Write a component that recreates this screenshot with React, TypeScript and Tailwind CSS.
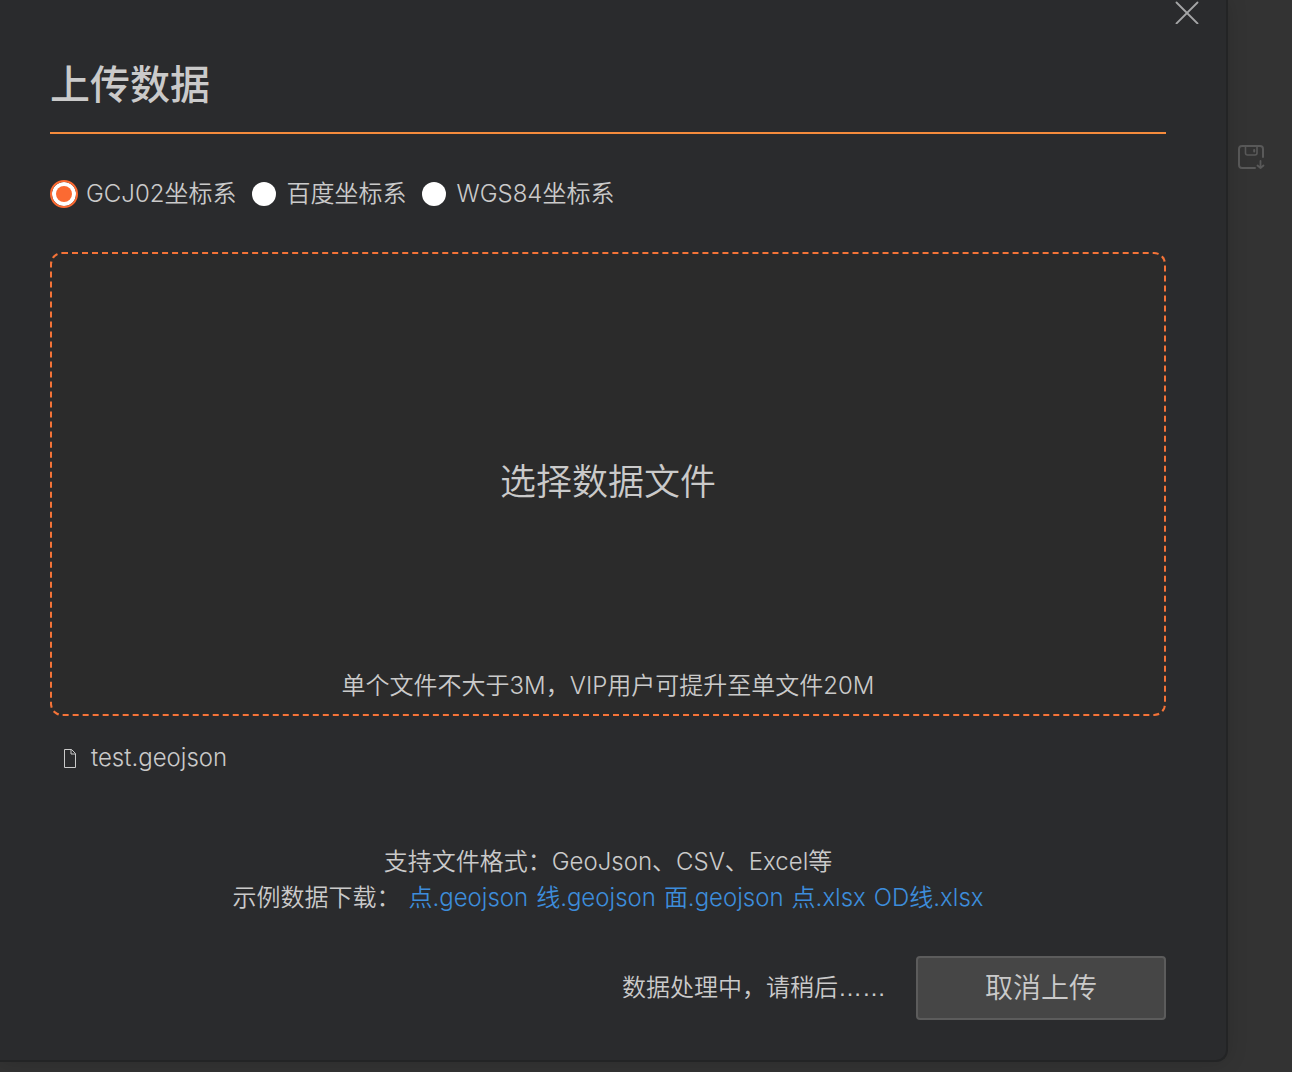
import { useState } from "react";

const systems = [
  { value: "gcj02", label: "GCJ02坐标系" },
  { value: "baidu", label: "百度坐标系" },
  { value: "wgs84", label: "WGS84坐标系" },
];

const samples = [
  "点.geojson",
  "线.geojson",
  "面.geojson",
  "点.xlsx",
  "OD线.xlsx",
];

function CloseIcon() {
  return (
    <svg
      viewBox="0 0 24 24"
      className="size-6"
      fill="none"
      stroke="currentColor"
      strokeWidth="1.8"
      strokeLinecap="round"
    >
      <path d="M1.5 2.5 22.5 23.5M22.5 2.5 1.5 23.5" />
    </svg>
  );
}

function FileIcon() {
  return (
    <svg
      viewBox="0 0 14 20"
      className="h-5 w-[14px]"
      fill="none"
      stroke="currentColor"
      strokeWidth="1"
    >
      <path d="M1.5 1.5H8.5L12.5 5.5V19.5H1.5Z" />
      <path d="M8 1.5V6H12.5" />
    </svg>
  );
}

function SaveIcon() {
  return (
    <svg
      viewBox="0 0 28 28"
      className="size-7"
      fill="none"
      stroke="currentColor"
      strokeWidth="2"
      strokeLinecap="round"
      strokeLinejoin="round"
    >
      <path d="M18 25H5Q2 25 2 22V6Q2 3 5 3H23Q26 3 26 6V14" />
      <path d="M8.5 3V10Q8.5 12 10.5 12H18Q20 12 20 10V3" strokeWidth="1.6" />
      <path d="M17.2 7V8.5" />
      <path d="M23.5 18V25M20.5 22.5 23.5 25 26.5 22.5" strokeWidth="1.8" />
    </svg>
  );
}

export default function App() {
  const [system, setSystem] = useState("gcj02");

  return (
    <div className="flex min-h-screen bg-[#333333] font-['Inter','Noto_Sans_CJK_SC',sans-serif] text-2xl font-[350] leading-9 text-[#cacaca]">
      <main
        role="dialog"
        aria-labelledby="upload-title"
        className="relative mb-[10px] flex-1 rounded-br-xl border-r-2 border-b-2 border-[#232425] bg-[#2a2b2d] pt-14 pr-[60px] pb-10 pl-[50px] shadow-[0_0_20px_rgba(0,0,0,0.15)]"
      >
        <button
          type="button"
          aria-label="关闭"
          className="absolute top-0 right-[27px] text-[#a5a6a7]"
        >
          <CloseIcon />
        </button>

        <h1
          id="upload-title"
          className="border-b-2 border-[#f58b3c] pb-[18px] text-[40px] leading-[58px] font-medium"
        >
          上传数据
        </h1>

        <div className="mt-[42px] flex gap-[14px]">
          {systems.map((item) => (
            <label key={item.value} className="flex items-center gap-2">
              <input
                type="radio"
                name="system"
                value={item.value}
                checked={system === item.value}
                onChange={() => setSystem(item.value)}
                className="grid size-7 appearance-none place-items-center rounded-full border-2 border-transparent bg-white bg-clip-padding before:size-4 before:rounded-full checked:border-[#fb6a32] checked:before:bg-[#fb6a32]"
              />
              {item.label}
            </label>
          ))}
        </div>

        <label className="relative mt-10 flex h-[464px] cursor-pointer flex-col items-center rounded-xl border-2 border-dashed border-[#f47338] bg-[#2b2b2b] pb-[10px]">
          <input type="file" className="sr-only" />
          <span className="flex flex-1 items-center pt-[42px] text-4xl">
            选择数据文件
          </span>
          <span>单个文件不大于3M，VIP用户可提升至单文件20M</span>
        </label>

        <p className="mt-6 flex items-center gap-[14px] pl-[13px]">
          <FileIcon />
          test.geojson
        </p>

        <div className="mt-[68px] text-center">
          <p>支持文件格式：GeoJson、CSV、Excel等</p>
          <p className="flex justify-center gap-2">
            <span>示例数据下载：</span>
            {samples.map((name) => (
              <a key={name} href="#" className="text-[#3d8ddb]">
                {name}
              </a>
            ))}
          </p>
        </div>

        <div className="mt-10 flex items-center justify-end gap-[30px]">
          <span className="font-['Liberation_Sans','Noto_Sans_CJK_SC',sans-serif]">
            数据处理中，请稍后……
          </span>
          <button
            type="button"
            className="h-16 w-[250px] rounded-sm border-2 border-[#5c5c5c] bg-[#464646] text-[28px]"
          >
            取消上传
          </button>
        </div>
      </main>

      <aside className="w-16 pt-[143px] pl-[9px] text-[#595959]">
        <button type="button" aria-label="保存">
          <SaveIcon />
        </button>
      </aside>
    </div>
  );
}
